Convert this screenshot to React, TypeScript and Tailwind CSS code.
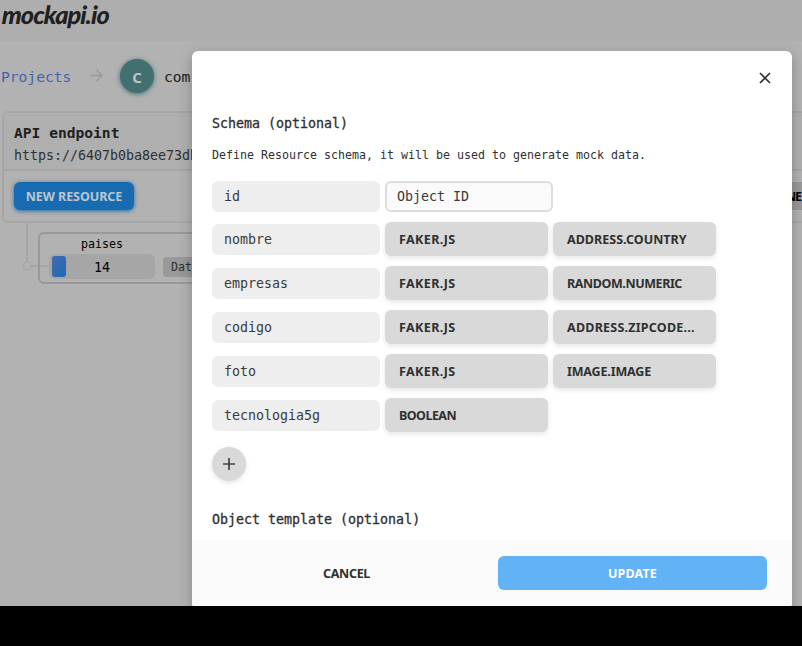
import type { ReactNode } from "react";

const rows = [
  { name: "nombre", types: [{ label: "FAKER.JS" }, { label: "ADDRESS.COUNTRY", spacing: "tracking-[0.02px]" }] },
  { name: "empresas", types: [{ label: "FAKER.JS" }, { label: "RANDOM.NUMERIC", spacing: "tracking-[-0.42px]" }] },
  { name: "codigo", types: [{ label: "FAKER.JS" }, { label: "ADDRESS.ZIPCODE...", spacing: "tracking-[0.23px]" }] },
  { name: "foto", types: [{ label: "FAKER.JS" }, { label: "IMAGE.IMAGE", spacing: "tracking-[-0.15px]" }] },
  { name: "tecnologia5g", types: [{ label: "BOOLEAN", spacing: "tracking-[-0.55px]" }] },
];

function Field({ children }: { children: ReactNode }) {
  return (
    <div className="h-[31px] w-[168px] shrink-0 rounded-md bg-[#eeeeee] pl-3 text-[13.3px] leading-[31px] text-[#3a3a3a]">
      {children}
    </div>
  );
}

function TypeButton({ children, spacing = "tracking-[0.4px]" }: { children: ReactNode; spacing?: string }) {
  return (
    <button
      className={`h-[34px] w-[163px] shrink-0 rounded-md bg-[#d9d9d9] pt-px pl-3.5 text-left font-['Noto_Sans',sans-serif] text-[12.5px] leading-[33px] font-bold text-[#303030] shadow-[0_2px_5px_rgba(0,0,0,0.1)] ${spacing}`}
    >
      {children}
    </button>
  );
}

function Background() {
  return (
    <div className="h-[606px] bg-[#b2b2b2]">
      <header className="h-[41px] bg-[#aeaeae]">
        <span className="ml-0.5 inline-block -skew-x-3 font-[Lato,sans-serif] text-[25px] leading-[28px] font-black tracking-[-0.8px] text-[#202020] italic">
          mockapi.io
        </span>
      </header>
      <nav className="flex h-[70px] items-center">
        <span className="w-[89px] pt-0.5 pl-px text-[14.6px] text-[#4165ab]">Projects</span>
        <svg width="15" height="14" viewBox="0 0 15 14" fill="none" stroke="#989898" strokeWidth="1.3">
          <path d="M1 6.500h12M7.500 0.700 13 6.500l-5.500 5.800" />
        </svg>
        <span className="ml-4 flex size-[34px] items-center justify-center rounded-full bg-[#426f70] pt-0.5 font-['Noto_Sans',sans-serif] text-[15px] font-bold text-[#bfc4c4] shadow-[0_1px_5px_#426f70]">
          C
        </span>
        <span className="ml-[10px] pt-0.5 text-[14.6px] text-[#202020]">com</span>
      </nav>
      <section className="ml-0.5 h-[112px] rounded-l-md border-2 border-r-0 border-[#a6a6a6]">
        <div className="h-[58px] border-b-2 border-[#a6a6a6] bg-[#afafaf] pt-2.5 pl-2.5">
          <div className="text-[14.6px] leading-[20px] font-bold text-[#202020]">API endpoint</div>
          <div className="mt-1 text-[13.3px] leading-[18px] text-[#303030]">https://6407b0ba8ee73db92e</div>
        </div>
        <div className="flex justify-between pt-[11px] pl-2.5">
          <button className="h-7 w-[120px] rounded-md bg-[#186bb1] pt-px font-['Noto_Sans',sans-serif] text-[12.5px] leading-[27px] font-bold tracking-[-0.05px] text-[#bac6cf] shadow-[0_1px_4px_#186bb1]">
            NEW RESOURCE
          </button>
          <span className="h-7 w-[22px] bg-[#99999d] pt-px pl-1.5 font-['Noto_Sans',sans-serif] text-[12.5px] leading-[27px] font-bold tracking-[-1.2px] text-black">
            NE
          </span>
        </div>
      </section>
      <div className="flex">
        <svg className="shrink-0" width="38" height="60" viewBox="0 0 38 60" fill="none" stroke="#a6a6a6" strokeWidth="2">
          <path d="M27 0v38M31 43h7" />
          <circle cx="27" cy="43" r="4" strokeWidth="1.5" />
        </svg>
        <div className="mt-[9px] h-[52px] w-[220px] rounded-md border-2 border-[#999999] pt-0.5">
          <div className="ml-2.5 w-[104px] text-center text-[11.6px] leading-[16px] text-black">paises</div>
          <div className="mt-0.5 flex">
            <div className="mt-[11px] h-0.5 w-[9px] bg-[#a6a6a6]" />
            <div className="relative h-[25px] w-[106px] rounded-md bg-[#a6a6a6] text-center text-[13.3px] leading-[27px] text-black">
              <span className="absolute top-0.5 left-[3px] h-[21px] w-3.5 rounded-[3px] bg-linear-to-br from-[#4269af] to-[#186ab5]" />
              14
            </div>
            <div className="mt-[3px] ml-2 h-5 w-14 rounded bg-[#999999] pl-2 text-[11.6px] leading-5 text-[#303030]">Data</div>
          </div>
        </div>
      </div>
    </div>
  );
}

export default function App() {
  return (
    <div className="relative h-[646px] w-[802px] overflow-hidden bg-black font-['DejaVu_Sans_Mono',monospace]">
      <Background />
      <div className="absolute top-0 left-0 h-[606px] w-full overflow-hidden">
        <div className="mt-[51px] ml-[192px] flex h-[555px] w-[600px] flex-col rounded-t-md rounded-b-[2px] bg-white text-[#303030] shadow-[0_4px_14px_rgba(0,0,0,0.25)]">
          <div className="flex h-[58px] justify-end pt-5 pr-5">
            <svg width="14" height="14" viewBox="0 0 14 14" stroke="#333" strokeWidth="1.7">
              <path d="m2 2 10 10M12 2 2 12" />
            </svg>
          </div>
          <main className="flex h-[431px] flex-col pl-5">
            <h2 className="mt-[5px] text-[13.3px] leading-5 [-webkit-text-stroke:0.3px_#303030]">Schema (optional)</h2>
            <p className="mt-3 text-[11.64px] leading-[18px]">Define Resource schema, it will be used to generate mock data.</p>
            <div className="mt-[17px] flex gap-[5px]">
              <Field>id</Field>
              <div className="h-[31px] w-[168px] rounded-md border-2 border-[#dddddd] bg-[#fafafa] pl-2.5 text-[13.3px] leading-[27px] text-[#3a3a3a]">
                Object ID
              </div>
            </div>
            <div className="mt-2.5 flex flex-col gap-2.5">
              {rows.map(({ name, types }) => (
                <div key={name} className="flex items-center gap-[5px]">
                  <Field>{name}</Field>
                  {types.map((t) => (
                    <TypeButton key={t.label} spacing={"spacing" in t ? t.spacing : undefined}>
                      {t.label}
                    </TypeButton>
                  ))}
                </div>
              ))}
            </div>
            <button className="mt-[15px] flex size-[34px] items-center justify-center rounded-full bg-[#d9d9d9] shadow-[0_2px_5px_rgba(0,0,0,0.1)]">
              <svg width="14" height="14" viewBox="0 0 14 14" stroke="#444" strokeWidth="1.7">
                <path d="M7 1v12M1 7h12" />
              </svg>
            </button>
            <h2 className="mt-[29px] text-[13.3px] leading-5 [-webkit-text-stroke:0.3px_#303030]">Object template (optional)</h2>
          </main>
          <footer className="flex h-[66px] items-start rounded-b-[2px] bg-[#fafafa] pt-4 font-['Noto_Sans',sans-serif] text-[12.5px] font-bold">
            <button className="ml-5 h-[34px] w-[269px] pt-0.5 tracking-[-0.3px]">CANCEL</button>
            <button className="ml-[17px] h-[34px] w-[269px] rounded-md bg-[#62b2f6] pt-0.5 tracking-[0.15px] text-white">UPDATE</button>
          </footer>
        </div>
      </div>
    </div>
  );
}
